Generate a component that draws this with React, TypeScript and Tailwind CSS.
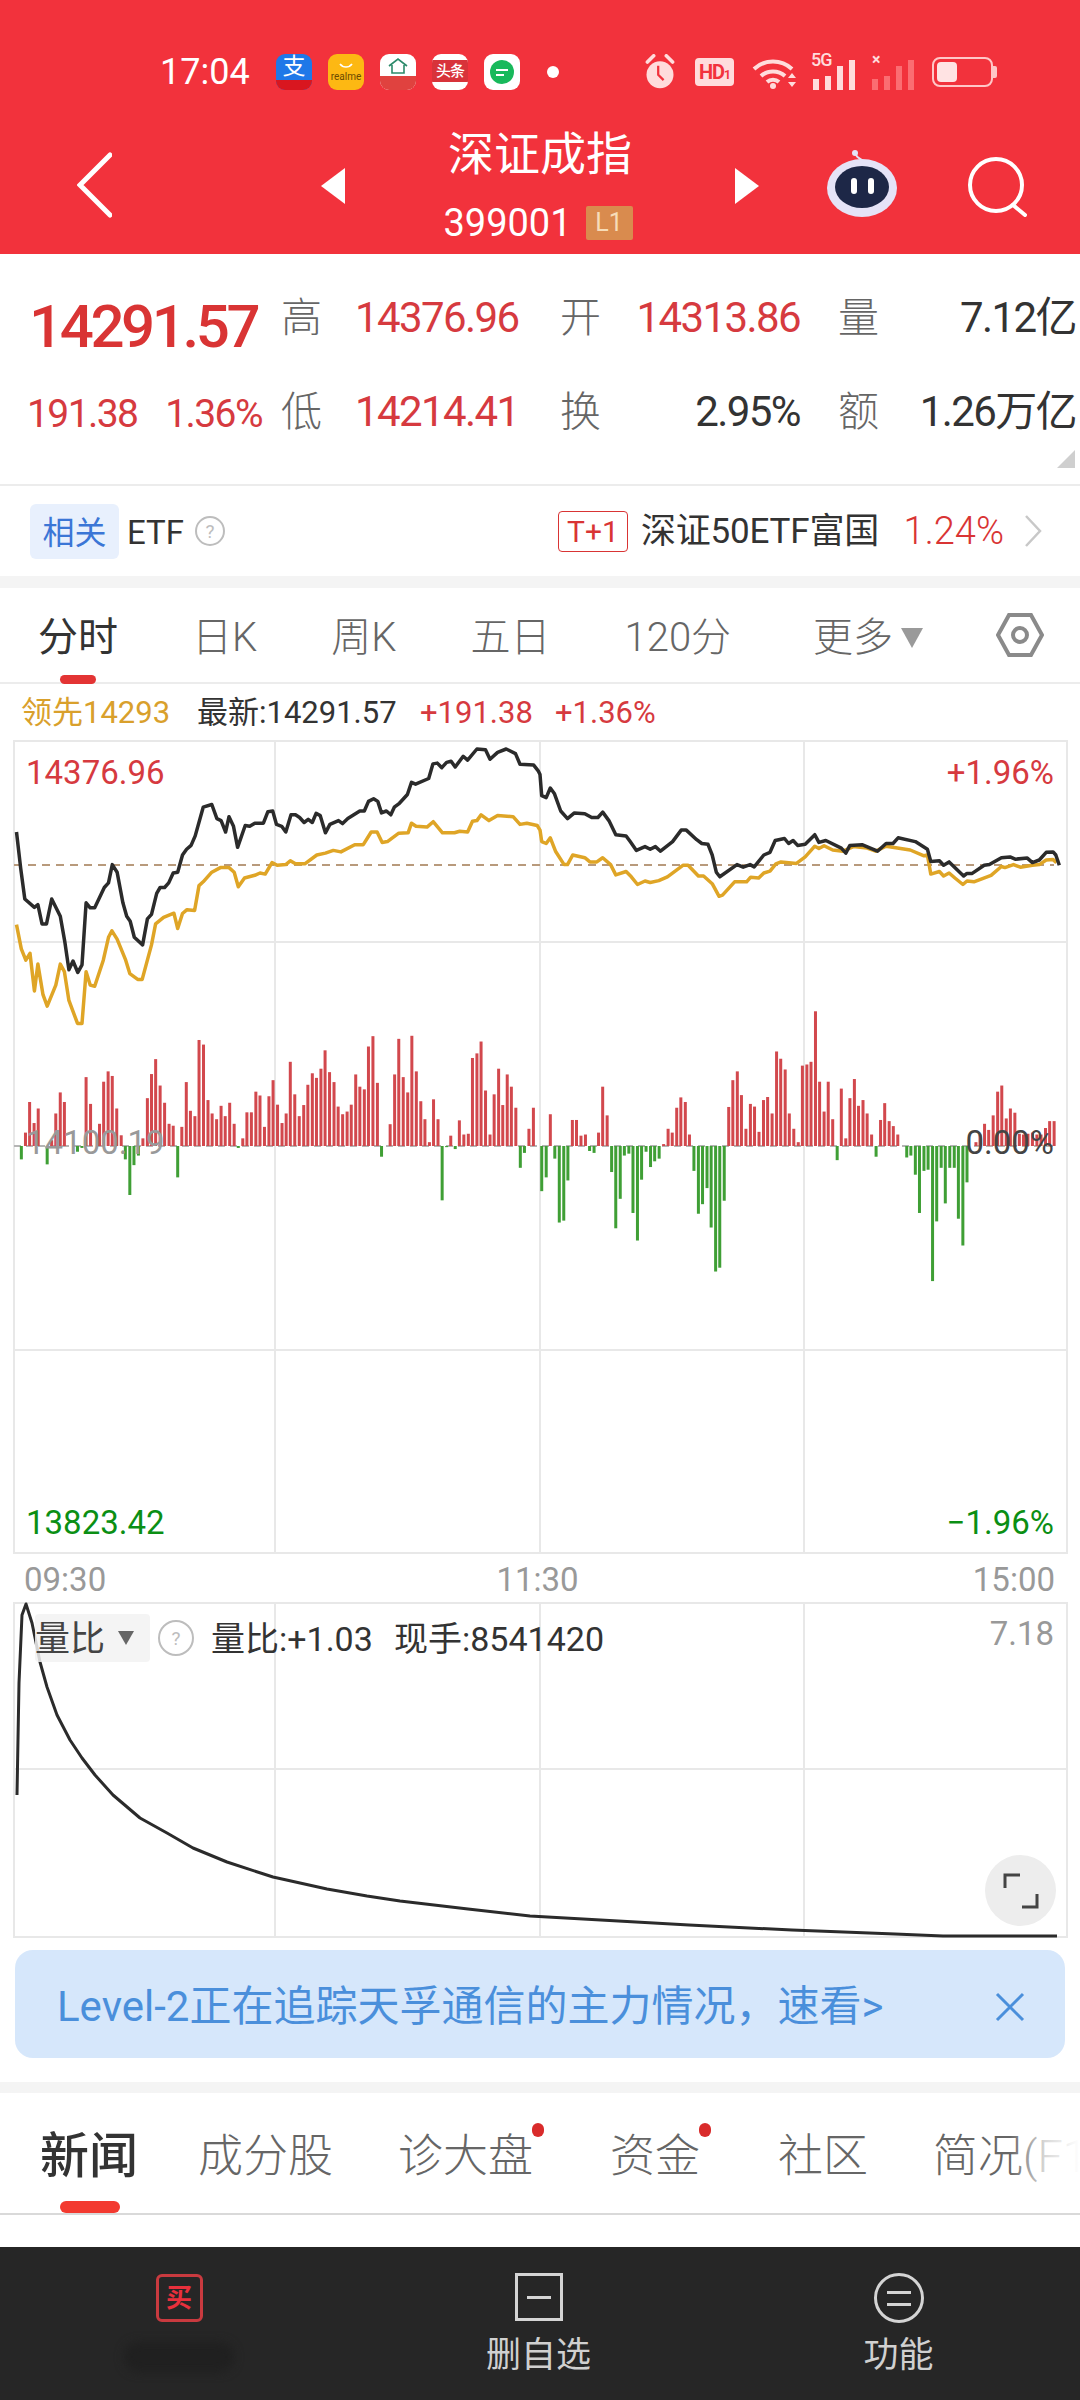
import React from "react";

type Pt = [number, number];

// Chart data, read off the reference
const blackLeft: Pt[] = [[48,345],[60,440],[72,520],[100,542],[110,535],[122,585],[135,585],[150,520],[175,565],[188,630],[200,705],[212,682],[226,712],[238,692],[250,530],[262,543],[275,543],[303,490],[315,478],[326,430],[340,450],[357,530],[368,565],[378,578],[390,620],[414,640],[428,572],[440,560],[455,505],[465,490],[478,490],[490,478],[503,452],[516,450],[530,405],[542,390],[555,380],[567,355],[590,280],[615,273],[630,310],[642,315],[655,345],[665,305],[678,330],[690,385],[712,328],[725,330],[740,322],[765,322],[778,292],[792,290],[803,325],[818,330],[830,345],[845,300],[858,300],[870,307],[883,320],[895,312],[907,320],[918,296],[930,302],[945,347],[958,325],[983,315],[995,323],[1010,310],[1045,290],[1058,290],[1070,265],[1085,258],[1097,265],[1108,295],[1122,290],[1135,300],[1145,280],[1160,270],[1183,247],[1195,215],[1207,220],[1245,205],[1257,167],[1270,165],[1283,177],[1297,163],[1310,160],[1322,175],[1345,147],[1358,157],[1385,128],[1410,130],[1423,155],[1445,137],[1470,128],[1497,140],[1510,168],[1550,170],[1563,185]];
const blackRight: Pt[] = [[0,195],[5,250],[18,255],[30,230],[42,245],[60,290],[80,310],[100,295],[130,297],[150,307],[168,307],[182,293],[200,315],[220,352],[250,355],[262,370],[280,393],[305,383],[320,390],[335,383],[350,395],[385,370],[410,340],[425,340],[455,365],[470,375],[488,377],[500,405],[512,450],[522,462],[572,430],[590,437],[610,430],[622,436],[650,405],[668,398],[683,367],[710,362],[722,375],[735,367],[748,380],[770,377],[798,352],[810,372],[830,367],[875,387],[888,400],[900,380],[935,378],[980,395],[1005,375],[1025,375],[1040,360],[1090,370],[1125,390],[1135,422],[1160,420],[1172,432],[1188,423],[1230,460],[1240,453],[1255,453],[1290,432],[1305,430],[1340,412],[1365,410],[1380,416],[1415,413],[1430,425],[1450,418],[1470,398],[1490,397],[1498,405],[1508,432]];
const goldLeft: Pt[] = [[48,587],[62,650],[75,680],[87,662],[100,760],[110,690],[125,770],[137,800],[162,745],[175,690],[187,710],[200,785],[225,845],[238,845],[250,710],[262,745],[275,748],[300,680],[315,620],[325,603],[340,625],[365,680],[377,715],[400,730],[413,730],[440,640],[452,585],[475,568],[505,557],[516,597],[530,558],[543,548],[565,550],[578,485],[590,475],[615,450],[640,438],[665,438],[680,450],[692,488],[710,465],[740,458],[755,452],[770,455],[790,425],[805,432],[830,430],[843,420],[858,428],[885,428],[920,405],[945,400],[968,393],[990,397],[1030,378],[1055,378],[1078,345],[1095,345],[1110,372],[1125,370],[1158,348],[1185,347],[1195,322],[1208,330],[1240,332],[1258,318],[1285,347],[1320,347],[1335,343],[1358,345],[1372,317],[1385,315],[1397,300],[1420,315],[1445,302],[1490,305],[1510,325],[1530,322],[1560,328]];
const goldRight: Pt[] = [[0,340],[5,370],[18,375],[30,360],[45,395],[70,430],[80,430],[95,405],[130,412],[145,423],[165,423],[182,412],[205,430],[220,457],[250,448],[265,462],[283,482],[305,473],[320,477],[345,472],[370,462],[415,432],[430,432],[460,460],[475,460],[500,480],[520,513],[530,510],[565,475],[600,475],[612,463],[635,465],[650,452],[668,447],[685,428],[700,423],[745,427],[770,410],[798,382],[810,388],[825,381],[850,392],[880,395],[910,383],[950,387],[975,395],[1005,382],[1075,392],[1115,407],[1125,405],[1135,455],[1160,448],[1172,460],[1188,452],[1205,465],[1228,482],[1240,473],[1260,475],[1310,458],[1340,435],[1350,438],[1375,430],[1395,437],[1430,432],[1450,430],[1470,418],[1490,417],[1500,425]];
const barsLeft: Pt[] = [[62,-35],[74,35],[86,115],[99,60],[111,98],[137,-48],[150,15],[162,85],[175,140],[187,115],[225,-15],[238,-5],[250,180],[263,110],[289,58],[301,168],[314,195],[326,183],[339,98],[352,28],[364,-35],[377,-128],[389,-50],[402,-25],[415,20],[428,125],[440,188],[452,227],[465,158],[478,113],[491,58],[503,53],[516,-82],[528,50],[541,167],[553,92],[566,78],[578,277],[591,265],[604,120],[616,85],[629,70],[642,105],[654,78],[667,113],[680,58],[692,-5],[705,20],[717,88],[730,88],[743,142],[755,132],[768,50],[781,130],[793,172],[806,108],[819,60],[831,85],[843,220],[856,135],[869,78],[882,107],[894,160],[907,190],[919,178],[932,202],[944,250],[957,193],[970,167],[982,103],[995,83],[1008,90],[1020,108],[1033,187],[1045,155],[1058,148],[1070,260],[1083,287],[1096,165],[1108,-28],[1133,57],[1146,187],[1158,280],[1171,180],[1184,140],[1196,288],[1209,195],[1222,117],[1234,70],[1247,10],[1259,122],[1272,70],[1284,-142],[1297,-3],[1309,27],[1322,-8],[1334,67],[1347,30],[1360,32],[1372,230],[1385,242],[1397,273],[1410,145],[1423,30],[1435,135],[1448,202],[1460,107],[1473,187],[1485,155],[1498,100],[1511,-57],[1523,-18],[1536,45],[1549,100]];
const barsRight: Pt[] = [[5,-118],[18,-82],[30,83],[43,-33],[56,-200],[69,-195],[81,-90],[94,68],[106,68],[119,27],[132,30],[144,-13],[157,-18],[170,35],[182,155],[195,80],[208,-68],[220,-215],[233,-138],[245,-25],[258,-20],[270,-175],[283,-247],[295,-88],[308,-15],[321,-55],[333,-40],[346,-33],[359,5],[372,45],[384,35],[397,100],[409,127],[422,115],[434,30],[447,-65],[460,-177],[472,-152],[485,-110],[497,-213],[510,-328],[522,-318],[535,-143],[548,102],[560,172],[573,195],[585,133],[598,45],[611,110],[623,103],[636,37],[649,120],[661,128],[674,85],[687,247],[699,228],[712,200],[724,85],[737,45],[750,10],[762,210],[775,213],[787,220],[800,352],[812,168],[825,90],[837,168],[850,70],[863,-37],[875,150],[888,20],[900,125],[913,175],[925,105],[938,120],[950,85],[963,30],[976,-28],[989,68],[1001,112],[1014,65],[1026,52],[1039,30],[1065,-30],[1077,-25],[1090,-75],[1102,-175],[1115,-65],[1127,-62],[1140,-353],[1152,-197],[1165,-57],[1177,-150],[1190,-57],[1203,-57],[1215,-190],[1228,-260],[1240,-95],[1266,10],[1278,30],[1291,58],[1303,42],[1316,80],[1329,142],[1341,158],[1354,72],[1366,98],[1379,87],[1392,32],[1404,30],[1417,32],[1430,35],[1443,30],[1455,30],[1468,47],[1480,65],[1493,65]];
const ratioCurve = "17,1795 19,1683 22,1615 26,1604 32,1623 40,1662 47,1687 57,1715 70,1740 82,1758 95,1775 113,1795 140,1818 167,1833 193,1848 227,1862 273,1877 327,1889 367,1896 400,1901 468,1909 530,1916 689,1925 792,1930 895,1934 943,1936 1057,1936";

const toLine = (left: Pt[], right: Pt[]) =>
  [
    ...left.map(([x, y]) => [x / 2.904, 700 + y / 2.613]),
    ...right.map(([x, y]) => [540 + x / 2.904, 700 + y / 2.613]),
  ]
    .map(([x, y]) => `${x.toFixed(1)},${y.toFixed(1)}`)
    .join(" ");

const allBars = [
  ...barsLeft.map(([x, h]) => [x / 2.904, h / 2.613]),
  ...barsRight.map(([x, h]) => [540 + x / 2.904, h / 2.613]),
];

const AppIcon = ({ className, children }: { className: string; children: React.ReactNode }) => (
  <div className={`w-[36px] h-[36px] rounded-[9px] overflow-hidden flex flex-col items-center ${className}`}>
    {children}
  </div>
);

const StatusBar = () => (
  <div className="h-[104px] pt-[40px] flex items-center pl-[160px] text-white">
    <span className="w-[116px] text-[36px] leading-none">17:04</span>
    <div className="flex gap-[16px]">
      <AppIcon className="bg-[#1f78e8]">
        <span className="h-[26px] text-[23px] leading-[26px]">支</span>
        <span className="w-full flex-1 bg-[#d9161f]" />
      </AppIcon>
      <AppIcon className="bg-[#fdb813] text-[#6b4a00] justify-center">
        <svg viewBox="0 0 14 6" className="w-[14px] h-[6px] mb-[3px]" fill="none" stroke="white" strokeWidth="1.6">
          <path d="M1 1c3 4 9 4 12 0" />
        </svg>
        <span className="text-[10px] leading-none">realme</span>
      </AppIcon>
      <AppIcon className="bg-white">
        <svg viewBox="0 0 24 18" className="mt-[2px] w-[24px] h-[20px]" fill="none" stroke="#2c8a6a" strokeWidth="1.6">
          <path d="M3 9 12 2l9 7M6 8v8h12V8" />
        </svg>
        <span className="w-full flex-1 bg-[#e0423f]" />
      </AppIcon>
      <AppIcon className="bg-white justify-center">
        <span className="w-full h-[22px] mb-[3px] bg-[#d8333a] text-[15px] leading-[22px] font-medium text-center tracking-[-1px]">头条</span>
      </AppIcon>
      <AppIcon className="bg-white justify-center">
        <span className="w-[24px] h-[24px] rounded-full bg-[#18b95b] flex flex-col gap-[3px] items-start justify-center pl-[6px]">
          <span className="w-[12px] h-[2px] bg-white" />
          <span className="w-[8px] h-[2px] bg-white" />
        </span>
      </AppIcon>
    </div>
    <span className="ml-[27px] w-[12px] h-[12px] rounded-full bg-white" />
    <svg viewBox="0 0 34 40" className="ml-[84px] w-[34px] h-[36px]">
      <path d="M3 9 10 2M31 9l-7-7" stroke="#ffdcdc" strokeWidth="4" strokeLinecap="round" />
      <circle cx="17" cy="23" r="15" fill="#ffdcdc" />
      <path d="M15 13v10l6 6" stroke="#f2323c" strokeWidth="2.5" fill="none" />
    </svg>
    <span className="ml-[18px] w-[39px] h-[28px] rounded-[4px] bg-[#ffdcdc] text-[#f2323c] text-[20px] leading-[28px] font-bold text-center tracking-[-1px]">
      HD<span className="text-[12px]">1</span>
    </span>
    <svg viewBox="0 0 46 34" className="ml-[18px] w-[46px] h-[34px]" fill="none" stroke="#ffdcdc" strokeWidth="4">
      <path d="M2 14a28 28 0 0 1 38 0M9 21a18 18 0 0 1 24 0M15 27a9 9 0 0 1 12 0" />
      <circle cx="21" cy="31" r="3" fill="#ffdcdc" stroke="none" />
      <path d="m36 23 4-5 4 5zM36 27l4 5 4-5z" fill="#ffdcdc" stroke="none" />
    </svg>
    <div className="ml-[15px] relative w-[46px] h-[36px] flex items-end gap-[6px]">
      <span className="absolute left-[-2px] top-[-3px] text-[18px] leading-none font-medium tracking-[-1px] text-[#ffdcdc]">5G</span>
      <span className="w-[6px] h-[11px] bg-[#ffdcdc]" />
      <span className="w-[6px] h-[14px] bg-[#ffdcdc]" />
      <span className="w-[6px] h-[24px] bg-[#ffdcdc]" />
      <span className="w-[6px] h-[30px] bg-[#ffdcdc]" />
    </div>
    <div className="ml-[13px] relative w-[45px] h-[36px] flex items-end gap-[6px]">
      <span className="absolute left-0 top-[-2px] text-[16px] leading-none font-bold text-[#ffdcdc]">×</span>
      <span className="w-[6px] h-[11px] bg-[#fb6d72]" />
      <span className="w-[6px] h-[14px] bg-[#fb6d72]" />
      <span className="w-[6px] h-[24px] bg-[#fb6d72]" />
      <span className="w-[6px] h-[30px] bg-[#fb6d72]" />
    </div>
    <div className="ml-[15px] w-[61px] h-[30px] rounded-[8px] border-2 border-[#ffc7c7] p-[3px]">
      <div className="w-[20px] h-full rounded-[4px] bg-[#ffe3e3]" />
    </div>
    <span className="w-[4px] h-[12px] bg-[#ffc7c7] rounded-r-[2px]" />
  </div>
);

const NavBar = () => (
  <div className="h-[150px] flex items-start pl-[77px] text-white">
    <svg viewBox="0 0 35 66" className="mt-[48px] w-[35px] h-[66px]" fill="none" stroke="white" strokeWidth="5" strokeLinecap="round">
      <path d="M33 3 3 33l30 30" />
    </svg>
    <svg viewBox="0 0 24 36" className="ml-[209px] mt-[64px] w-[24px] h-[36px]" fill="white">
      <path d="M24 0v36L0 18z" />
    </svg>
    <div className="w-[390px] flex flex-col items-center">
      <span className="text-[46px] leading-[60px] mt-[20px]">深证成指</span>
      <div className="flex items-center mt-[19px] ml-[-4px] gap-[14px]">
        <span className="text-[38px] leading-[40px]">399001</span>
        <span className="w-[47px] h-[34px] bg-[#d98b4e] text-[#f7dcb8] text-[25px] leading-[34px] text-center rounded-[2px]">L1</span>
      </div>
    </div>
    <svg viewBox="0 0 24 36" className="mt-[64px] w-[24px] h-[36px]" fill="white">
      <path d="M0 0v36l24-18z" />
    </svg>
    <svg viewBox="0 0 72 68" className="ml-[67px] mt-[46px] w-[72px] h-[68px]">
      <path d="M36 10c-3-2-6-3-6-6" stroke="#e5e3f7" strokeWidth="2" fill="none" />
      <circle cx="29" cy="3" r="3" fill="#e5e3f7" />
      <ellipse cx="36" cy="38" rx="35" ry="29" fill="#e5e3f7" />
      <ellipse cx="36" cy="37" rx="27" ry="21" fill="#1d2747" />
      <rect x="25" y="28" width="6" height="16" rx="3" fill="white" />
      <rect x="42" y="28" width="6" height="16" rx="3" fill="white" />
    </svg>
    <svg viewBox="0 0 60 60" className="ml-[69px] mt-[53px] w-[60px] h-[60px]" fill="none" stroke="white" strokeWidth="4">
      <circle cx="29" cy="28" r="26" />
      <path d="m46 48 12 10" strokeLinecap="round" />
    </svg>
  </div>
);

const Stats = () => (
  <div className="relative h-[232px] pt-[17px] pl-[27px] pr-[4px] bg-white border-b-2 border-[#ececec] grid grid-cols-[254px_74px_205px_75px_203px_77px_1fr] grid-rows-[94px_94px] items-center text-[42px] tracking-[-1.6px] leading-none">
    <span className="pl-[2px] mt-[18px] text-[60px] font-medium text-[#d93434] tracking-[-3.4px]">14291.57</span>
    <span className="text-[41px] tracking-normal font-light text-[#666]">高</span>
    <span className="text-[#d63a3f]">14376.96</span>
    <span className="text-[41px] tracking-normal font-light text-[#666]">开</span>
    <span className="pr-[38px] text-right text-[#d63a3f]">14313.86</span>
    <span className="text-[41px] tracking-normal font-light text-[#666]">量</span>
    <span className="text-right text-[#333]">7.12亿</span>
    <span className="flex gap-[28px] mt-[4px] text-[39px] text-[#d63a3f]">
      <span>191.38</span>
      <span>1.36%</span>
    </span>
    <span className="text-[41px] tracking-normal font-light text-[#666]">低</span>
    <span className="text-[#d63a3f]">14214.41</span>
    <span className="text-[41px] tracking-normal font-light text-[#666]">换</span>
    <span className="pr-[38px] text-right text-[#333]">2.95%</span>
    <span className="text-[41px] tracking-normal font-light text-[#666]">额</span>
    <span className="text-right text-[#333]">1.26万亿</span>
    <svg viewBox="0 0 18 18" className="absolute right-[5px] bottom-[16px] w-[18px] h-[18px]" fill="#cfcfcf">
      <path d="M18 0v18H0z" />
    </svg>
  </div>
);

const QuestionMark = ({ size }: { size: string }) => (
  <span className={`${size} rounded-full border-2 border-[#bdbdbd] text-[#bdbdbd] flex items-center justify-center text-[19px] leading-none`}>?</span>
);

const EtfRow = () => (
  <div className="h-[90px] flex items-center pl-[30px] pr-[38px] bg-white">
    <span className="w-[89px] h-[55px] rounded-[6px] bg-[#e8f0fd] text-[#3b76d6] text-[32px] leading-[58px] text-center">相关</span>
    <span className="ml-[8px] mt-[3px] text-[33px] text-[#333]">ETF</span>
    <QuestionMark size="ml-[11px] w-[30px] h-[30px]" />
    <span className="ml-[333px] w-[70px] h-[41px] rounded-[4px] border border-[#d93434] text-[#d93434] text-[30px] leading-[40px] text-center">T+1</span>
    <span className="ml-[13px] mt-[3px] text-[35px] tracking-[-0.2px] text-[#333] whitespace-nowrap">深证50ETF富国</span>
    <span className="ml-auto text-[38px] font-light text-[#d93434]">1.24%</span>
    <svg viewBox="0 0 18 34" className="ml-[20px] w-[18px] h-[34px]" fill="none" stroke="#c8c8c8" strokeWidth="2.5">
      <path d="m2 2 14 15L2 32" />
    </svg>
  </div>
);

const PeriodTabs = () => (
  <div className="relative h-[96px] pt-[6px] flex items-center pl-[38px] pr-[36px] gap-[74px] bg-white border-b-2 border-[#ececec] text-[40px] text-[#666] font-light">
    <span className="text-[#333] font-normal">分时</span>
    <span>日K</span>
    <span>周K</span>
    <span>五日</span>
    <span>120分</span>
    <span className="ml-[8px] flex items-center gap-[8px]">
      更多
      <svg viewBox="0 0 22 20" className="w-[22px] h-[20px]" fill="#9a9a9a">
        <path d="M0 0h22L11 20z" />
      </svg>
    </span>
    <svg viewBox="0 0 48 46" className="absolute left-[996px] top-[24px] w-[48px] h-[46px]" fill="none" stroke="#8a8a8a" strokeWidth="4">
      <path d="M13 3h22l11 20-11 20H13L2 23z" />
      <circle cx="24" cy="23" r="7" />
    </svg>
    <span className="absolute left-[60px] bottom-[-2px] w-[36px] h-[9px] rounded-full bg-[#e33434]" />
  </div>
);

const Legend = () => (
  <div className="h-[56px] flex items-center pl-[21px] text-[31px] leading-none">
    <span className="w-[176px] text-[#d9a02c]">领先14293</span>
    <span className="w-[223px] text-[#333]">最新:14291.57</span>
    <span className="w-[135px] text-[#d63a3f]">+191.38</span>
    <span className="text-[#d63a3f]">+1.36%</span>
  </div>
);

const PriceChart = () => (
  <div className="relative mx-[13px] h-[814px] text-[33px] leading-none">
    <svg viewBox="13 740 1055 814" className="w-[1055px] h-[814px]" fill="none">
      <rect x="14" y="741" width="1053" height="812" stroke="#e8e8e8" strokeWidth="2" />
      <path d="M14 942h1053M14 1350h1053M275 741v812M540 741v812M804 741v812" stroke="#e8e8e8" strokeWidth="2" />
      <path d="M14 1146h1040" stroke="#b5b5b5" strokeWidth="2" strokeDasharray="7 5" />
      {allBars.map(([x, h]) => (
        <rect
          key={x}
          x={x - 1.5}
          y={h > 0 ? 1146 - h : 1146}
          width="3"
          height={Math.abs(h)}
          fill={h > 0 ? "#d2484d" : "#3f9f35"}
        />
      ))}
      <path d="M14 865h1040" stroke="#b89a7c" strokeWidth="2" strokeDasharray="8 6" />
      <polyline points={toLine(goldLeft, goldRight)} stroke="#dfa526" strokeWidth="3.5" strokeLinejoin="round" />
      <polyline points={toLine(blackLeft, blackRight)} stroke="#2b2b2b" strokeWidth="3.5" strokeLinejoin="round" />
    </svg>
    <span className="absolute left-[13px] top-[16px] text-[#d63a3f]">14376.96</span>
    <span className="absolute right-[13px] top-[16px] text-[#d63a3f]">+1.96%</span>
    <span className="absolute left-[13px] top-[386px] text-[#999]">14100.19</span>
    <span className="absolute right-[13px] top-[386px] text-[#444]">0.00%</span>
    <span className="absolute left-[13px] top-[766px] text-[#0b8f14]">13823.42</span>
    <span className="absolute right-[13px] top-[766px] text-[#0b8f14]">−1.96%</span>
  </div>
);

const TimeAxis = () => (
  <div className="h-[48px] pt-[2px] flex items-center justify-between pl-[24px] pr-[25px] text-[33px] leading-none text-[#999]">
    <span>09:30</span>
    <span className="ml-[-4px]">11:30</span>
    <span>15:00</span>
  </div>
);

const RatioChart = () => (
  <div className="relative mx-[13px] h-[336px]">
    <svg viewBox="13 1602 1055 336" className="w-[1055px] h-[336px]" fill="none">
      <rect x="14" y="1603" width="1053" height="334" stroke="#e8e8e8" strokeWidth="2" />
      <path d="M14 1769h1053M275 1603v334M540 1603v334M804 1603v334" stroke="#e8e8e8" strokeWidth="2" />
      <polyline points={ratioCurve} stroke="#2b2b2b" strokeWidth="3" strokeLinejoin="round" />
    </svg>
    <div className="absolute left-[22px] top-[12px] w-[115px] h-[48px] rounded-[4px] bg-[#f2f2f2]/85 flex items-center text-[35px] text-[#444] leading-none">
      <span className="mt-[2px]">量比</span>
      <svg viewBox="0 0 16 14" className="ml-[13px] w-[16px] h-[14px]" fill="#666">
        <path d="M0 0h16L8 14z" />
      </svg>
    </div>
    <QuestionMark size="absolute left-[145px] top-[18px] w-[36px] h-[36px]" />
    <span className="absolute left-[198px] top-[20px] text-[34px] leading-none text-[#333]">量比:+1.03</span>
    <span className="absolute left-[381px] top-[20px] text-[34px] leading-none text-[#333]">现手:8541420</span>
    <span className="absolute right-[13px] top-[15px] text-[33px] leading-none text-[#999]">7.18</span>
    <div className="absolute left-[972px] top-[253px] w-[71px] h-[71px] rounded-full bg-[#ededed] flex items-center justify-center">
      <svg viewBox="0 0 36 36" className="w-[36px] h-[36px]" fill="none" stroke="#444" strokeWidth="3">
        <path d="M2 15V2h15M34 21v13H19" />
      </svg>
    </div>
  </div>
);

const Banner = () => (
  <div className="mx-[15px] mt-[12px] h-[108px] pt-[5px] rounded-[18px] bg-[#d6e7fb] flex items-center pl-[42px] pr-[40px] text-[#4a8fdb] text-[42px] leading-none whitespace-nowrap">
    <span>Level-2正在追踪天孚通信的主力情况，速看&gt;</span>
    <svg viewBox="0 0 30 30" className="ml-auto w-[30px] h-[30px]" fill="none" stroke="#4a8fdb" strokeWidth="3">
      <path d="m2 2 26 26M28 2 2 28" />
    </svg>
  </div>
);

const NewsTabs = () => (
  <div className="relative h-[122px] pt-[6px] flex items-center bg-white border-b-2 border-[#d9d9d9] overflow-hidden text-[45px] leading-none font-light text-[#666] whitespace-nowrap">
    <span className="ml-[40px] text-[49px] font-medium text-[#333]">新闻</span>
    <span className="ml-[60px]">成分股</span>
    <span className="ml-[65px]">诊大盘</span>
    <span className="ml-[77px]">资金</span>
    <span className="ml-[78px]">社区</span>
    <span className="ml-[65px]">简况(F10)</span>
    <span className="absolute left-[1010px] top-0 w-[70px] h-full bg-gradient-to-r from-white/0 via-white/75 to-white" />
    <span className="absolute left-[532px] top-[30px] w-[12px] h-[14px] rounded-full bg-[#d92b2b]" />
    <span className="absolute left-[699px] top-[30px] w-[12px] h-[14px] rounded-full bg-[#d92b2b]" />
    <span className="absolute left-[60px] bottom-0 w-[60px] h-[12px] rounded-full bg-[#f33a30]" />
  </div>
);

const BottomBar = () => (
  <div className="mt-[32px] h-[153px] bg-[#262626] grid grid-cols-[358px_361px_1fr] text-[#d0d0d0] text-[35px] leading-none">
    <div className="flex flex-col items-center pt-[27px]">
      <span className="w-[47px] h-[48px] rounded-[6px] border-[3px] border-[#c93a3f] text-[#e8303c] text-[26px] leading-[42px] text-center font-bold">买</span>
      <span className="mt-[20px] w-[110px] h-[30px] rounded-full bg-[#202020] blur-[5px]" />
    </div>
    <div className="flex flex-col items-center pt-[26px]">
      <span className="w-[48px] h-[48px] border-[3px] border-[#d4d4d4] flex items-center justify-center">
        <span className="w-[24px] h-[3px] bg-[#d4d4d4]" />
      </span>
      <span className="mt-[17px]">删自选</span>
    </div>
    <div className="flex flex-col items-center pt-[26px] pr-[2px]">
      <span className="w-[50px] h-[50px] rounded-full border-[3px] border-[#d4d4d4] flex flex-col items-center justify-center gap-[9px]">
        <span className="w-[24px] h-[3px] bg-[#d4d4d4]" />
        <span className="w-[24px] h-[3px] bg-[#d4d4d4]" />
      </span>
      <span className="mt-[15px]">功能</span>
    </div>
  </div>
);

export default function App() {
  return (
    <div className="w-[1080px] h-[2400px] overflow-hidden bg-white font-[family-name:Roboto,'Noto_Sans_CJK_SC',sans-serif]">
      <div className="bg-[#f2323c]">
        <StatusBar />
        <NavBar />
      </div>
      <Stats />
      <EtfRow />
      <div className="h-[12px] bg-[#f4f4f4]" />
      <PeriodTabs />
      <Legend />
      <PriceChart />
      <TimeAxis />
      <RatioChart />
      <Banner />
      <div className="mt-[24px] h-[11px] bg-[#f4f4f4]" />
      <NewsTabs />
      <BottomBar />
    </div>
  );
}
